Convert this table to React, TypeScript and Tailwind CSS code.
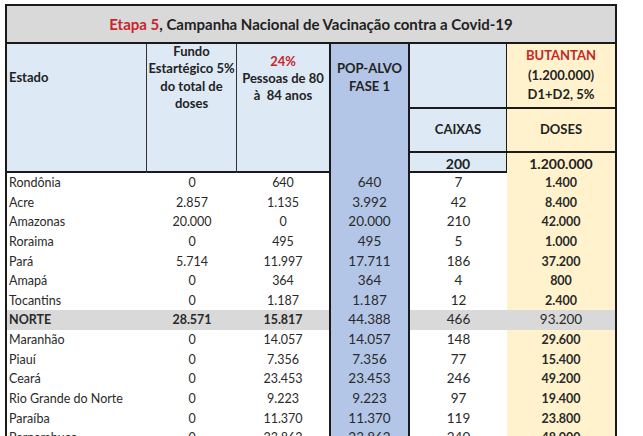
import React from "react";

type Row = {
  estado: string;
  fundo: string;
  pessoas: string;
  pop: string;
  caixas: string;
  doses: string;
  total?: boolean;
};

const rows: Row[] = [
  { estado: "Rondônia", fundo: "0", pessoas: "640", pop: "640", caixas: "7", doses: "1.400" },
  { estado: "Acre", fundo: "2.857", pessoas: "1.135", pop: "3.992", caixas: "42", doses: "8.400" },
  { estado: "Amazonas", fundo: "20.000", pessoas: "0", pop: "20.000", caixas: "210", doses: "42.000" },
  { estado: "Roraima", fundo: "0", pessoas: "495", pop: "495", caixas: "5", doses: "1.000" },
  { estado: "Pará", fundo: "5.714", pessoas: "11.997", pop: "17.711", caixas: "186", doses: "37.200" },
  { estado: "Amapá", fundo: "0", pessoas: "364", pop: "364", caixas: "4", doses: "800" },
  { estado: "Tocantins", fundo: "0", pessoas: "1.187", pop: "1.187", caixas: "12", doses: "2.400" },
  { estado: "NORTE", fundo: "28.571", pessoas: "15.817", pop: "44.388", caixas: "466", doses: "93.200", total: true },
  { estado: "Maranhão", fundo: "0", pessoas: "14.057", pop: "14.057", caixas: "148", doses: "29.600" },
  { estado: "Piauí", fundo: "0", pessoas: "7.356", pop: "7.356", caixas: "77", doses: "15.400" },
  { estado: "Ceará", fundo: "0", pessoas: "23.453", pop: "23.453", caixas: "246", doses: "49.200" },
  { estado: "Rio Grande do Norte", fundo: "0", pessoas: "9.223", pop: "9.223", caixas: "97", doses: "19.400" },
  { estado: "Paraíba", fundo: "0", pessoas: "11.370", pop: "11.370", caixas: "119", doses: "23.800" },
  { estado: "Pernambuco", fundo: "0", pessoas: "23.862", pop: "23.862", caixas: "240", doses: "48.000" },
];

const cols = "grid grid-cols-[140px_90px_92px_81px_97px_108px]";

function DataRow({ row }: { row: Row }) {
  const bg = row.total ? "bg-[#d9d9d9]" : "";
  const strong = row.total ? "font-bold" : "";
  return (
    <div className={`${cols} h-[19.65px] text-[12.5px] leading-[19.65px] text-[#2a2a2a]`}>
      <div className={`${bg} ${strong} pl-[2px]`}>{row.estado}</div>
      <div className={`${bg} ${strong} text-center`}>{row.fundo}</div>
      <div className={`${bg} ${strong} text-center`}>{row.pessoas}</div>
      <div className="border-x-2 border-[#1a1a1a] bg-[#b4c6e7] text-center text-[13.5px]">{row.pop}</div>
      <div className={`${bg} text-center text-[13.5px]`}>{row.caixas}</div>
      <div className={`${row.total ? "bg-[#d9d9d9] text-[13.5px]" : "bg-[#fff2cc] font-bold"} text-center`}>
        {row.doses}
      </div>
    </div>
  );
}

export default function App() {
  return (
    <div className="h-[436px] w-[643px] overflow-hidden bg-white pl-[5px] pt-[4px] font-['Lato',sans-serif]">
      <div className="w-[612px] border-x-2 border-t-2 border-[#1a1a1a]">
        <div className="flex h-[38px] items-center justify-center border-b-2 border-[#1a1a1a] bg-[#d9d9d9] text-[15px] font-bold text-[#222]">
          <span className="text-[#c8262b]">Etapa 5</span>, Campanha Nacional de Vacinação contra a Covid-19
        </div>

        <div className={`${cols} h-[129px] grid-rows-[65px_44px_20px] border-b-2 border-[#1a1a1a] bg-[#dde9f5] text-[13px] font-bold text-[#222]`}>
          <div className="row-span-3 border-r border-[#333]">
            <div className="flex h-[66px] items-center pl-[2px] pt-[1px]">Estado</div>
          </div>
          <div className="row-span-3 border-r border-[#333]">
            <div className="flex h-[66px] flex-col items-center justify-center pt-[1px] text-center leading-[17.3px]">
              <span>Fundo</span>
              <span>Estartégico 5%</span>
              <span>do total de</span>
              <span>doses</span>
            </div>
          </div>
          <div className="row-span-3">
            <div className="flex h-[66px] flex-col items-center justify-center pt-[3px] text-center leading-[17px]">
              <span className="text-[#c8262b]">24%</span>
              <span>Pessoas de 80</span>
              <span>à&nbsp; 84 anos</span>
            </div>
          </div>
          <div className="row-span-3 border-x-2 border-[#1a1a1a] bg-[#b4c6e7]">
            <div className="flex h-[66px] flex-col items-center justify-center text-center leading-[18px]">
              <span>POP-ALVO</span>
              <span>FASE 1</span>
            </div>
          </div>
          <div className="border-b-2 border-r border-[#1a1a1a]" />
          <div className="flex flex-col items-center justify-center border-b-2 border-[#1a1a1a] bg-[#fff2cc] text-center leading-[19.5px]">
            <span className="text-[#c8262b]">BUTANTAN</span>
            <span>(1.200.000)</span>
            <span>D1+D2, 5%</span>
          </div>
          <div className="flex items-center justify-center border-b-2 border-r border-[#1a1a1a]">CAIXAS</div>
          <div className="flex items-center justify-center border-b-2 border-[#1a1a1a] bg-[#fff2cc]">DOSES</div>
          <div className="flex items-center justify-center border-r border-[#1a1a1a] text-[14px]">200</div>
          <div className="flex items-center justify-center bg-[#fff2cc] text-[14px]">1.200.000</div>
        </div>

        {rows.map((row) => (
          <DataRow key={row.estado} row={row} />
        ))}
      </div>
    </div>
  );
}
